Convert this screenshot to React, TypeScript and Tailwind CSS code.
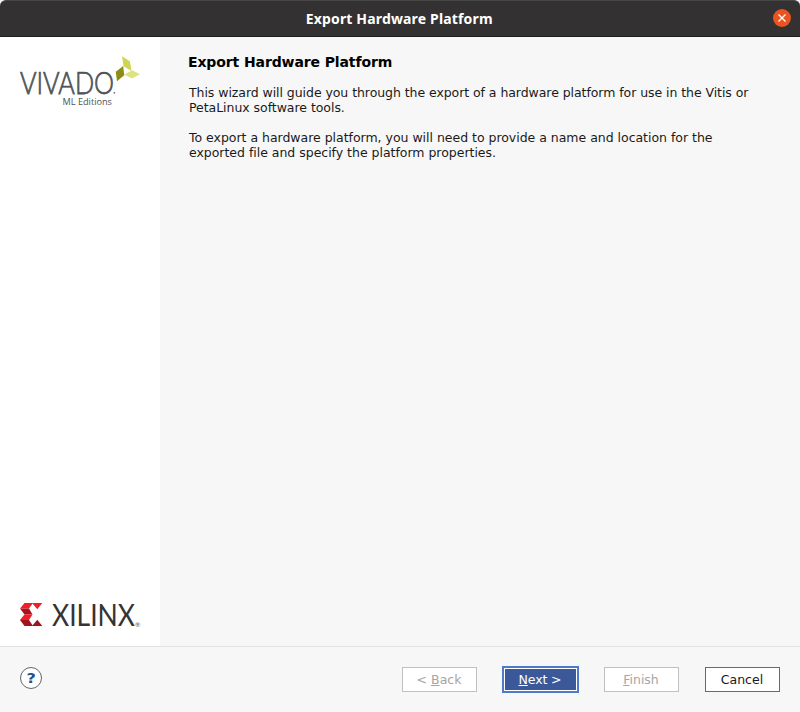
import React from "react";

function VivadoLogo() {
  return (
    <svg width="122" height="56" viewBox="20 55 122 56" className="block overflow-visible">
      <text x="20" y="94" textLength="94" lengthAdjust="spacingAndGlyphs" fontSize="31" fontWeight="300" fill="#4d5357" stroke="#4d5357" strokeWidth="0.75" style={{ fontFamily: "Lato, sans-serif" }}>VIVADO</text>
      <circle cx="114.3" cy="92.8" r="0.9" fill="#6d7175" />
      <text x="62.5" y="105" textLength="49.5" lengthAdjust="spacingAndGlyphs" fontSize="9.5" fill="#4d5357" style={{ fontFamily: "'Open Sans', sans-serif" }}>ML Editions</text>
      <path d="M122 56.3L129.8 61.2L131.6 71L123.6 66.2Z" fill="#d0d451" />
      <path d="M124 74.6L132.3 70.2L139.9 74.3L132 78.4Z" fill="#dfe280" />
      <path d="M115.8 71.8L123.2 66L124.2 75.2L117 81.2Z" fill="#8c8d16" />
    </svg>
  );
}

function XilinxLogo() {
  return (
    <svg width="122" height="26" viewBox="20 602 122 26" className="block overflow-visible">
      <path d="M24.5 603H33L29 608.5H20Z" fill="#ee2027" />
      <path d="M20 608.5H29L32.5 614.5H24.5Z" fill="#a9131d" />
      <path d="M24.5 614.5H32.5L29 620H20Z" fill="#ee2027" />
      <path d="M20 620H29L33 626H24.5Z" fill="#a0141d" />
      <path d="M32 603H42.3L37.3 609.2Z" fill="#ee2027" />
      <path d="M32 626H42.3L37.3 619.8Z" fill="#a0141d" />
      <text x="52" y="625.7" textLength="83" lengthAdjust="spacingAndGlyphs" fontSize="31.5" fill="#353334" style={{ fontFamily: "Lato, sans-serif" }}>XILINX</text>
      <text x="135" y="626.5" fontSize="6.5" fill="#555" style={{ fontFamily: "Lato, sans-serif" }}>®</text>
    </svg>
  );
}

export default function App() {
  return (
    <div className="flex h-[712px] w-[800px] flex-col bg-[#f7f7f7] text-[#1a1a1a] [font-family:'DejaVu_Sans',sans-serif]">
      <header className="grid h-[37px] shrink-0 grid-cols-[1fr_auto_1fr] items-center rounded-t-[6px] border-t border-b border-t-[#474646] border-b-[#1d1c1c] bg-[#333132]">
        <span />
        <h1 className="pr-[1.5px] text-[14px] font-bold tracking-[0.16px] text-white [font-family:'Noto_Sans',sans-serif]">Export Hardware Platform</h1>
        <button className="mr-[9px] mb-px flex size-[18px] items-center justify-center justify-self-end rounded-full bg-[#e95420]">
          <svg width="8" height="8" viewBox="0 0 8 8"><path d="M0.5 0.5L7.5 7.5M7.5 0.5L0.5 7.5" stroke="#fff" strokeWidth="1.3" /></svg>
        </button>
      </header>
      <main className="flex h-[609px] shrink-0">
        <aside className="flex w-[160px] flex-col justify-between bg-white pt-[18px] pr-[18px] pb-[18px] pl-5">
          <VivadoLogo />
          <XilinxLogo />
        </aside>
        <section className="pt-4 pl-7">
          <h2 className="text-[14px] leading-[18px] font-bold tracking-[-0.11px] text-black">Export Hardware Platform</h2>
          <div className="mt-[14px] ml-px flex flex-col gap-[15px] text-[12.5px] leading-[15px] whitespace-nowrap">
            <p><span className="tracking-[-0.06px]">This wizard will guide you through the export of a hardware platform for use in the Vitis or</span><br /><span className="tracking-[-0.04px]">PetaLinux software tools.</span></p>
            <p className="tracking-[-0.02px]">To export a hardware platform, you will need to provide a name and location for the<br />exported file and specify the platform properties.</p>
          </div>
        </section>
      </main>
      <footer className="flex flex-1 justify-between border-t border-[#e2e2e2] pt-5 pr-5 pl-5 text-[12.5px]">
        <button className="flex size-[22px] items-center justify-center rounded-full border border-[#666] bg-white text-[14px] font-bold text-[#2b4c86]"><span className="scale-x-115">?</span></button>
        <div className="flex h-[25px]">
          <button className="w-[75px] border border-[#c0c0c0] bg-white pt-[2px] pr-px text-[#a5a5a5]">&lt; <u>B</u>ack</button>
          <button className="-mt-px mr-[25px] ml-[25px] h-[27px] w-[77px] border-2 border-[#4c7bcb] bg-white p-px text-white"><span className="flex h-full items-center justify-center bg-[#3b5998] pt-px pr-px tracking-[-0.1px]"><u>N</u>ext&nbsp;&gt;</span></button>
          <button className="w-[75px] border border-[#c0c0c0] bg-white pt-[2px] pr-px text-[#a5a5a5]"><u>F</u>inish</button>
          <button className="ml-[26px] w-[75px] border border-[#6a6a6a] bg-white pt-[2px] pr-px">Cancel</button>
        </div>
      </footer>
    </div>
  );
}
